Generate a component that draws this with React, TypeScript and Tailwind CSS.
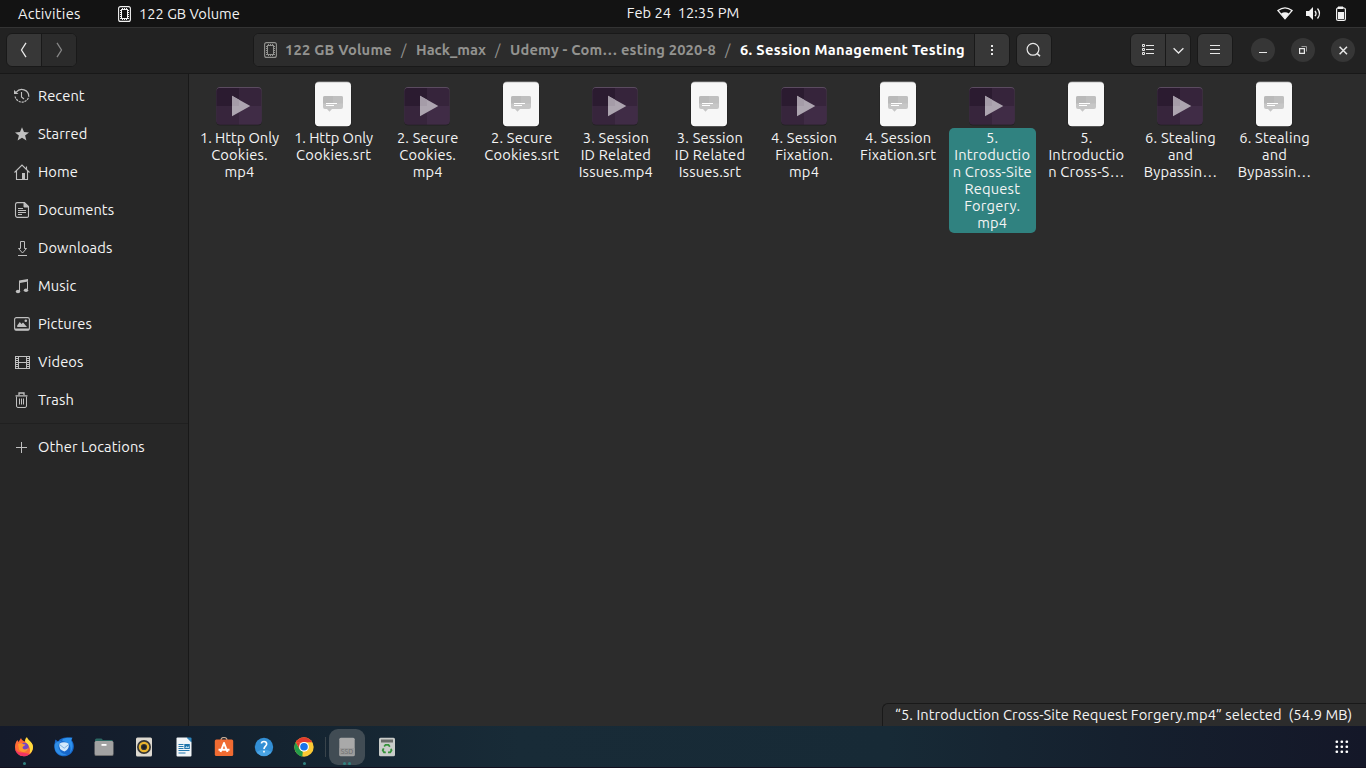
import React from "react";

/* Single line of text that keeps its spaces and never wraps. */
function T({ children, className = "" }: { children: string; className?: string }) {
  return <span className={`shrink-0 whitespace-pre ${className}`}>{children}</span>;
}

function DriveIcon({ className = "" }: { className?: string }) {
  return (
    <svg width="14" height="16" viewBox="0 0 14 16" fill="none" stroke="currentColor" className={`shrink-0 ${className}`}>
      <rect x="0.6" y="0.6" width="11.800" height="14.800" rx="2" strokeWidth="1.1" />
      <rect x="3.5" y="3.5" width="6" height="9" strokeWidth="1" />
      <path d="M2.500 4v9M10.500 4v9" strokeWidth="1" strokeDasharray="1 1" />
      <path d="M4 2.500h6M4 13.500h6" strokeWidth="1" strokeDasharray="1 1" />
    </svg>
  );
}

function VideoFile() {
  return (
    <svg width="46" height="46" viewBox="0 0 46 46" className="block">
      <rect x="0.5" y="7" width="45" height="37.500" rx="3.5" fill="#212121" />
      <rect x="0.5" y="6" width="45" height="37" rx="3.5" fill="#5b4b60" />
      <rect x="0.5" y="7" width="45" height="36.400" rx="3.5" fill="#36243b" />
      <path d="M0.5 25V10.500A3.5 3.5 0 0 1 4 7h19v18z" fill="#2b1b30" />
      <path d="M0.5 25H23v18.400H4a3.5 3.5 0 0 1-3.5-3.5z" fill="#37253c" />
      <path d="M23 25h22.5v14.900a3.5 3.5 0 0 1-3.5 3.500H23z" fill="#402c46" />
      <path d="M16 14.800v20.500L34.300 25z" fill="#ada5b0" />
      <path d="M16 14.800V25h7v-6.300z" fill="#a59ca8" />
    </svg>
  );
}

function SubtitleFile() {
  return (
    <svg width="46" height="46" viewBox="0 0 46 46" className="block">
      <rect x="4.500" y="2" width="37" height="44" rx="4" fill="#202020" />
      <rect x="5" y="0.500" width="36" height="44" rx="4" fill="#8b8b8b" />
      <rect x="5" y="1.200" width="36" height="44" rx="4" fill="#f7f7f7" />
      <path d="M15 15h16a2 2 0 0 1 2 2v9a2 2 0 0 1-2 2H22l-2.500 2.800-2.500-2.800h-2a2 2 0 0 1-2-2v-9a2 2 0 0 1 2-2z" fill="#c6c6c6" />
      <path d="M15 15h8v7.500H13V17a2 2 0 0 1 2-2z" fill="#b9b9b9" />
      <path d="M23 15h8a2 2 0 0 1 2 2v5.500H23z" fill="#bfbfbf" />
      <path d="M16 22.500h11M16 24.500h8" stroke="#fff" strokeWidth="1" />
    </svg>
  );
}

const steal = ["6. Stealing", "and", "Bypassin…"];
const files: { video: boolean; lines: string[]; selected?: boolean }[] = [
  { video: true, lines: ["1. Http Only", "Cookies.", "mp4"] },
  { video: false, lines: ["1. Http Only", "Cookies.srt"] },
  { video: true, lines: ["2. Secure", "Cookies.", "mp4"] },
  { video: false, lines: ["2. Secure", "Cookies.srt"] },
  { video: true, lines: ["3. Session", "ID Related", "Issues.mp4"] },
  { video: false, lines: ["3. Session", "ID Related", "Issues.srt"] },
  { video: true, lines: ["4. Session", "Fixation.", "mp4"] },
  { video: false, lines: ["4. Session", "Fixation.srt"] },
  { video: true, selected: true, lines: ["5.", "Introductio", "n Cross-Site", "Request", "Forgery.", "mp4"] },
  { video: false, lines: ["5.", "Introductio", "n Cross-S…"] },
  { video: true, lines: steal },
  { video: false, lines: steal },
];

const sideIcons: Record<string, React.ReactNode> = {
  Recent: (
    <g fill="none" stroke="currentColor">
      <path d="M2.300 4.200A7 7 0 0 1 14.800 8.500" strokeWidth="1.200" />
      <path d="M1.100 8.500a7 7 0 0 0 13.700 0" strokeWidth="1.200" strokeDasharray="2.200 .8" />
      <path d="M7.500 4v5l2.500 2" strokeWidth="1.100" />
      <path d="M0 2v4h4.500z" fill="currentColor" stroke="none" />
    </g>
  ),
  Starred: <path d="M8 1.200l2 4.900 5 .3-3.900 3.200 1.300 5L8 11.800l-4.400 2.800 1.300-5L1 6.400l5-.3z" fill="currentColor" />,
  Home: (
    <g fill="none" stroke="currentColor" strokeWidth="1.100">
      <path d="M.5 8.500L8 1l7.500 7.500M2.500 7v8.500h11V7M12.500 2.500V6" />
      <path d="M8 9h3v6H8z" fill="currentColor" stroke="none" />
    </g>
  ),
  Documents: (
    <g fill="none" stroke="currentColor">
      <path d="M10.500.6H3A1.800 1.800 0 0 0 1.500 2.400v11.200A1.800 1.800 0 0 0 3 15.400h10a1.500 1.500 0 0 0 1.500-1.800V4.500z" strokeWidth="1.100" />
      <path d="M10 .5V5h4.500z" fill="currentColor" />
      <path d="M4 6.500h5M4 8.500h8M4 10.500h8M4 12.500h4" />
    </g>
  ),
  Downloads: (
    <path d="M6.500 1.500h4v7h2L8.500 13 4.500 8.500h2zM4 15.500h9" fill="none" stroke="currentColor" strokeWidth="1" />
  ),
  Music: (
    <g fill="currentColor">
      <path d="M5 2.500L14 1v2.500L6 5v8H5zM13 2h1v9h-1z" />
      <ellipse cx="4" cy="13.500" rx="2.200" ry="1.800" />
      <ellipse cx="12" cy="12.300" rx="2.200" ry="1.800" />
    </g>
  ),
  Pictures: (
    <g>
      <rect x=".6" y="1.600" width="14.800" height="12.600" rx="1.800" fill="none" stroke="currentColor" strokeWidth="1.100" />
      <path d="M1 12.500h14v1.700H1zM3.200 11V9.500l2.600-3.600L7.500 8 9 6.500l4 4.500z" fill="currentColor" />
      <circle cx="11.800" cy="4.700" r="1.300" fill="currentColor" />
    </g>
  ),
  Videos: (
    <g fill="none" stroke="currentColor">
      <path d="M1 2.500h15M1 14.500h15M4.500 2v12M12.500 2v12M4 8.500h9" />
      <path d="M1.500 2v13M15.500 2v13" />
      <path d="M3 4v10M14 4v10" strokeDasharray="1 1" strokeWidth="2" />
    </g>
  ),
  Trash: (
    <g fill="none" stroke="currentColor">
      <path d="M1.500 3.900h12M5 3V1h5v2" strokeWidth="1.300" />
      <path d="M2.500 4.500v9.500a1.500 1.500 0 0 0 1.500 1.500h7a1.500 1.500 0 0 0 1.500-1.500V4.500" />
      <path d="M5.500 6.500v6M7.500 6.500v6M9.500 6.500v6" />
    </g>
  ),
  "Other Locations": <path d="M2 8.500h11M7.500 3v11" stroke="currentColor" fill="none" />,
};

function SideRow({ name }: { name: string }) {
  return (
    <div className="flex h-[38px] items-center pl-[14px]">
      <svg width="17" height="17" viewBox="0 0 17 17" className="shrink-0 text-[#c0c0c0]">
        {sideIcons[name]}
      </svg>
      <T className="ml-[7px] pb-[2px] tracking-[0.09px]">{name}</T>
    </div>
  );
}

function TopBar() {
  return (
    <div className="flex h-[27px] shrink-0 items-center bg-[#131313] text-[#f2f2f2]">
      <div className="flex flex-1 items-center">
        <T className="ml-[18px] w-[62px] tracking-[0.25px]">Activities</T>
        <DriveIcon className="ml-[38px]" />
        <T className="ml-[7px]">122 GB Volume</T>
      </div>
      <T className="pb-[2px]">Feb 24  12:35 PM</T>
      <div className="flex flex-1 items-center justify-end">
        <svg width="70" height="16" viewBox="0 0 70 16" fill="none" stroke="currentColor" className="mr-[19px]">
          <path d="M.9 4.500Q8 -.8 15.100 4.500L8 12.800z" strokeWidth="1.200" />
          <path d="M4 7.500Q8 5 12 7.500L8 13z" fill="currentColor" stroke="none" />
          <path d="M29 5h3l4-4v13l-4-4h-3z" fill="currentColor" stroke="none" />
          <path d="M38 4.800q2 2.700 0 5.400M40.500 2.500q4 5 0 10" strokeWidth="1.300" />
          <path d="M61 1h5v1.500h-5z" fill="currentColor" />
          <rect x="59.600" y="2" width="8.800" height="12.400" rx="1.500" strokeWidth="1.200" />
          <path d="M61 6h6v7h-6z" fill="currentColor" stroke="none" />
        </svg>
      </div>
    </div>
  );
}

const box = "flex h-[34px] shrink-0 rounded-[6px] border border-[#191919] bg-[#373737]";
const cell = "flex items-center justify-center";
const circle = "flex size-[24px] shrink-0 items-center justify-center rounded-full bg-[#363636]";

function HeaderBar() {
  return (
    <div className="flex h-[46px] shrink-0 items-center border-t border-[#333333] bg-[#222222] pb-px pl-[6px] text-[#e8e8e8]">
      <div className={`${box} w-[71px] overflow-hidden`}>
        <div className={`${cell} w-[35px] border-r border-[#191919]`}>
          <svg width="8" height="16" viewBox="0 0 8 16" fill="none" stroke="currentColor" strokeWidth="1.300"><path d="M6 .8L1.500 8 6 15.200" /></svg>
        </div>
        <div className={`${cell} flex-1 bg-[#2b2b2b] text-[#858585]`}>
          <svg width="8" height="16" viewBox="0 0 8 16" fill="none" stroke="currentColor" strokeWidth="1.300"><path d="M2 .8L6.500 8 2 15.200" /></svg>
        </div>
      </div>
      <div className={`${box} ml-[176px] w-[757px] overflow-hidden`}>
        <div className="flex flex-1 items-center bg-[#2c2c2c] pl-[10px] font-bold text-[#939390]">
          <DriveIcon />
          <T className="ml-[7px] w-[107px] pb-[2px] tracking-[0.22px]">122 GB Volume</T>
          <T className="ml-[9px] w-[6px] pb-[2px] font-normal">/</T>
          <T className="ml-[9px] w-[71px] pb-[2px]">Hack_max</T>
          <T className="ml-[8px] w-[6px] pb-[2px] font-normal">/</T>
          <T className="ml-[9px] w-[207px] pb-[2px] tracking-[0.19px]">Udemy - Com… esting 2020-8</T>
          <T className="ml-[8px] w-[6px] pb-[2px] font-normal">/</T>
          <T className="ml-[9px] pb-[2px] tracking-[0.32px] text-white">6. Session Management Testing</T>
        </div>
        <div className={`${cell} w-[35px] border-l border-[#191919]`}>
          <svg width="2" height="12" viewBox="0 0 2 12" fill="currentColor"><path d="M0 1h2v2H0zM0 5h2v2H0zM0 9h2v2H0z" /></svg>
        </div>
      </div>
      <div className={`${box} ${cell} ml-[6px] w-[36px]`}>
        <svg width="16" height="16" viewBox="0 0 16 16" fill="none" stroke="currentColor" strokeWidth="1.200"><circle cx="7" cy="7.300" r="5.900" /><path d="M11.200 11.500l2.800 2.800" strokeWidth="1.600" /></svg>
      </div>
      <div className={`${box} ml-[78px] w-[61px]`}>
        <div className={`${cell} w-[35px] border-r border-[#191919]`}>
          <svg width="13" height="12" viewBox="0 0 13 12" fill="none" stroke="currentColor"><path d="M4 1.500h8M4 5.500h8M4 9.500h8M.5 .5h2v2h-2zM.5 4.500h2v2h-2zM.5 8.500h2v2h-2z" /></svg>
        </div>
        <div className={`${cell} flex-1`}>
          <svg width="11" height="7" viewBox="0 0 11 7" fill="none" stroke="currentColor" strokeWidth="1.300"><path d="M.6 1.200l4.900 4.800 4.900-4.800" /></svg>
        </div>
      </div>
      <div className={`${box} ${cell} ml-[6px] w-[36px]`}>
        <svg width="10" height="10" viewBox="0 0 10 10" fill="currentColor"><path d="M0 0h10v1H0zM0 4h10v1H0zM0 8h10v1H0z" /></svg>
      </div>
      <div className={`${circle} ml-[18px]`}>
        <svg width="8" height="10" viewBox="0 0 8 10" fill="currentColor"><path d="M0 7h8v1H0z" /></svg>
      </div>
      <div className={`${circle} ml-[16px]`}>
        <svg width="8" height="8" viewBox="0 0 8 8" fill="none" stroke="currentColor"><path d="M.6 2.600h4.800v4.800H.6z" strokeWidth="1.200" /><path d="M2.500 .5h5v5" stroke="#999" /></svg>
      </div>
      <div className={`${circle} ml-[16px]`}>
        <svg width="9" height="9" viewBox="0 0 9 9" fill="none" stroke="currentColor" strokeWidth="1.500"><path d="M.6 .8l7.400 7.400M8 .8L.6 8.200" /></svg>
      </div>
    </div>
  );
}

const dockIcons: { art: React.ReactNode; dots?: number; active?: boolean }[] = [
  {
    dots: 1,
    art: (
      <g>
        <path d="M1 10C1 7 2 4.500 3.500 3l.8 2C6 3 6 2.500 7 1c.5 2 2 3 4 3.500.5-2 .5-3 2-4 .6 3 3 4 4.500 5.500C20 9 19 14 16.500 16.500 13 20 7 20 4 17 2 15 1 13 1 10z" fill="#ff6a35" />
        <path d="M11 4c.5-2 .7-3 2-3.700.6 3 6 4.500 6 9.700 0 3-1.500 5.500-3.500 7 .5-3 1-5-.5-7.500C14 7 11.500 6.500 11 4z" fill="#ffdc3d" />
        <path d="M1 11c2 4 4 5 7.500 4.500l7 1.500C12 20.500 7 19.500 4 17 2.300 15.500 1.200 13.500 1 11z" fill="#f13464" />
        <circle cx="10.500" cy="10" r="4.200" fill="#7544c5" />
        <path d="M4 7c2-1.200 4-1 5.500.2l2 .3c-1 1.600-2.300 1.200-3 3C9 13 12 13 14.500 11 13 16 7 16 5 12.500z" fill="#ff9a2b" />
      </g>
    ),
  },
  {
    art: (
      <g>
        <path d="M1.500 2.500L4 4.500C6 1.500 9 .5 12 .5h6.500l-1 2.500c2.500 3 3 7 1.500 10.500-2 4.500-7 6.500-11.500 5.500C2 17.500-.5 12.500.5 7.500c.3-2 .3-3 1-5z" fill="#1767ca" />
        <path d="M9 2c3-1.500 6-1.500 9 -1l-1 2.500C19.500 7 19 12.500 16 16c1-4 .5-7.500-1.500-9.500S9.500 5 8 3.500z" fill="#2d91ed" />
        <path d="M.8 7C3 4.500 5.500 4 7.500 4.500 4.500 6 4 9 5 12c1 3.500 4.500 5.500 8 5-4.500 3-10 0-11.500-3.500C.8 11.500.4 9 .8 7z" fill="#2f8de6" />
        <path d="M5.500 6.500Q10 4 14.500 6.500 16 11.500 10.500 14.500 4 12.500 5.500 6.500z" fill="#d3e9fb" />
        <path d="M5.500 7.500l4.700 3.700 4.500-3.700" stroke="#7fb0de" fill="none" />
      </g>
    ),
  },
  {
    art: (
      <g>
        <path d="M1 3a1.500 1.500 0 0 1 1.500-1.500h5L9 3h9.500v8H1z" fill="#2b6762" />
        <rect x=".5" y="4" width="19" height="15" rx="1.500" fill="#6e6e6e" />
        <rect x=".8" y="4" width="18.400" height="14" rx="1.500" fill="#a2a2a2" />
        <path d="M7.500 7h5v1.800h-5z" fill="#fff" />
      </g>
    ),
  },
  {
    art: (
      <g>
        <rect x="2" y="0.500" width="16" height="19" rx="1.500" fill="#ddd9d0" />
        <circle cx="10" cy="10" r="7" fill="#363636" />
        <circle cx="10" cy="10" r="4.200" fill="none" stroke="#e9b42e" strokeWidth="2.200" />
        <circle cx="10" cy="10" r="2" fill="#202020" />
      </g>
    ),
  },
  {
    art: (
      <g>
        <path d="M2.500 1.500A1 1 0 0 1 3.500 .5H13L17.500 5v13.500a1 1 0 0 1-1 1h-13a1 1 0 0 1-1-1z" fill="#f1f5f8" />
        <path d="M12.500 .5H16.500a1 1 0 0 1 1 1V5.500z" fill="#2e86bd" />
        <path d="M4.500 7.500h5M4.500 9.500h5M4.500 11.500h5M4.500 13.500h11M4.500 16h7" stroke="#2478ad" strokeWidth="1.100" />
        <path d="M10.300 7h5.500v5h-5.500z" fill="#1f73aa" />
        <path d="M11 11l1.500-2 1.300 1.200L15 9v2z" fill="#b8dcf0" />
      </g>
    ),
  },
  {
    art: (
      <g>
        <path d="M7 3q0-2.500 3-2.500t3 2.500" fill="none" stroke="#c6aa94" strokeWidth="1.200" />
        <rect x=".8" y="2.500" width="18.400" height="16.500" rx="1.500" fill="#f06b32" />
        <path d="M6.500 15L10 6l3.500 9M4.500 12.800h11" fill="none" stroke="#fff" strokeWidth="2" strokeLinejoin="round" />
      </g>
    ),
  },
  {
    art: (
      <g>
        <circle cx="10" cy="10" r="9.200" fill="#338fd5" />
        <path d="M2.500 15a9 9 0 0 0 15 0q-7-5-15 0z" fill="#49a3e2" />
        <path d="M7.500 6.500Q7.500 4.500 10 4.500T12.700 7c0 2-2.700 2.400-2.700 5M10 13.700v1.800" fill="none" stroke="#fff" strokeWidth="1.600" />
      </g>
    ),
  },
  {
    dots: 1,
    art: (
      <g>
        <circle cx="10" cy="10" r="9.700" fill="#fcc934" />
        <path d="M1.600 5.200A9.700 9.700 0 0 1 18.400 5.200H10z" fill="#e33b2e" />
        <path d="M1.600 5.200L5 11l5-5.800z" fill="#e33b2e" />
        <path d="M1.600 5.200l4.200 7.300 3 2.300-.5 4.700A9.700 9.700 0 0 1 1.600 5.200z" fill="#249c4b" />
        <circle cx="10" cy="9.800" r="4.900" fill="#fff" />
        <circle cx="10" cy="9.800" r="3.800" fill="#1a73e8" />
      </g>
    ),
  },
  {
    dots: 2,
    active: true,
    art: (
      <g>
        <rect x="2.300" y=".7" width="15.400" height="18.600" rx="1.500" fill="#a9a9a9" />
        <path d="M2.500 11h15v7.500h-15z" fill="#9c9c9c" />
        <text x="10" y="16.600" textAnchor="middle" fontSize="7" fill="#6a6a6a">SSD</text>
      </g>
    ),
  },
  {
    art: (
      <g>
        <rect x="2" y=".7" width="16" height="18.600" rx="1.500" fill="#c9ccc9" />
        <path d="M4 2.500h12v3H4z" fill="#686c68" />
        <path d="M7.200 9.500l1.300-1.700h3l1.300 2M14 11.800l.5 1.500-1.300 2h-2.200M8.800 15.300H7l-1.300-2 1-2" fill="none" stroke="#35923a" strokeWidth="1.800" />
      </g>
    ),
  },
];

function Dock() {
  return (
    <div className="flex h-[42px] shrink-0 items-center border-b border-[#12101f] bg-[linear-gradient(90deg,#141a2a_0%,#142330_20%,#182b37_38%,#172a36_65%,#15202e_82%,#141728_100%)] pl-[6px]">
      {dockIcons.map((d, i) => (
        <React.Fragment key={i}>
          {i === 8 && <div className="h-5 w-px bg-[#39444b]" />}
          <div
            className={`relative flex h-[36px] shrink-0 items-center justify-center ${
              d.active ? "ml-[3px] w-[36px] rounded-[9px] bg-[#414c54]" : i === 9 ? "ml-[2px] w-[40px]" : "w-[40px]"
            } ${i === 7 ? "mr-px" : ""} ${i < 8 ? "-ml-0.5 mr-0.5" : ""}`}
          >
            <svg width="20" height="20" viewBox="0 0 20 20">{d.art}</svg>
            {d.dots && (
              <div className="absolute bottom-0 flex w-full justify-center gap-[2px]">
                <i className="size-[3px] rounded-full bg-[#308280]" />
                {d.dots === 2 && <i className="size-[3px] rounded-full bg-[#308280]" />}
              </div>
            )}
          </div>
        </React.Fragment>
      ))}
      <svg width="14" height="14" viewBox="0 0 14 14" className="ml-auto mr-[17px]" fill="#fff">
        {[0, 5, 10].map((y) => [0, 5, 10].map((x) => <rect key={`${x}-${y}`} x={x + 0.500} y={y + 0.500} width="2.600" height="2.600" rx="1" />))}
      </svg>
    </div>
  );
}

export default function App() {
  return (
    <div className="flex h-[768px] w-[1366px] flex-col overflow-hidden bg-[#2c2c2c] font-['Ubuntu','Noto_Sans',sans-serif] text-[14.667px] leading-[17px] text-[#f4f4f4]">
      <TopBar />
      <HeaderBar />
      <div className="flex min-h-0 flex-1 border-t border-[#181818]">
        <div className="w-[189px] shrink-0 border-r border-[#181818] bg-[#272727] pt-[3px]">
          <SideRow name="Recent" />
          <SideRow name="Starred" />
          <SideRow name="Home" />
          <SideRow name="Documents" />
          <SideRow name="Downloads" />
          <SideRow name="Music" />
          <SideRow name="Pictures" />
          <SideRow name="Videos" />
          <SideRow name="Trash" />
          <div className="mt-[4px] mb-[4px] h-px bg-[#202020]" />
          <SideRow name="Other Locations" />
        </div>
        <div className="flex min-w-0 flex-1 flex-col justify-between">
          <div className="grid grid-cols-[repeat(12,94.1px)] items-start pt-[7px] pl-[7px]">
            {files.map((f, i) => (
              <div key={i} className="flex w-[87px] flex-col items-center">
                <div className="-ml-px h-[47px]">{f.video ? <VideoFile /> : <SubtitleFile />}</div>
                <div className={`flex w-full flex-col items-center rounded-[5px] pt-px pb-[2px] ${f.selected ? "bg-[#308280]" : ""}`}>
                  {f.lines.map((t, k) => (
                    <T key={k} className={t === "1. Http Only" ? "tracking-[-0.05px]" : "tracking-[0.2px]"}>{t}</T>
                  ))}
                </div>
              </div>
            ))}
          </div>
          <div className="flex h-[23px] w-[484px] items-center self-end rounded-tl-[6px] border-t border-l border-[#191919] pl-[12px]">
            <T className="pb-[2px] tracking-[0.09px]">“5. Introduction Cross-Site Request Forgery.mp4” selected  (54.9 MB)</T>
          </div>
        </div>
      </div>
      <Dock />
    </div>
  );
}
